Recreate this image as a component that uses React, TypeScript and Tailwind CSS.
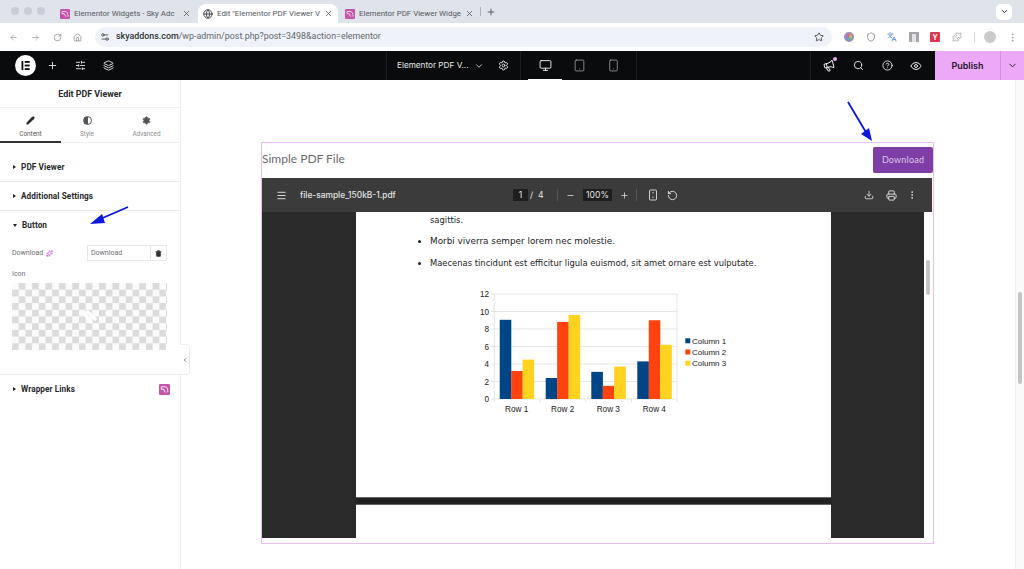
import React from "react";
import {
  ArrowLeft, ArrowRight, RotateCw, Home, Star, Plus, SlidersHorizontal, Layers, ChevronDown, Settings, Monitor, Tablet,
  Smartphone, Search, CircleHelp, Eye, Megaphone, Menu, Minus, Download, Printer, EllipsisVertical, Pencil, Trash2, Globe,
  X, Sparkles, ChevronLeft, RotateCcw, Puzzle, Shield, Languages, Settings2,
} from "lucide-react";

function SkyLogo({ size = 11 }: { size?: number }) {
  return (
    <svg width={size} height={size} viewBox="0 0 12 12" className="shrink-0">
      <rect width="12" height="12" rx="1.5" fill="#c255a8" />
      <path d="M2.5 3h4M2.5 3v2.6h2.5l2 3.6M6.5 3c2.2 0 3.2 2.6 3.2 6.2" stroke="#f8dcf0" strokeWidth="1.1" fill="none" />
    </svg>
  );
}

function Tab({ w, active, text, icon }: { w: string; active?: boolean; text: string; icon: React.ReactNode }) {
  return (
    <div className={`${w} ${active ? "bg-white rounded-t-lg" : ""} h-[19px] flex items-center pl-[6px] pr-[7px] gap-[4px] shrink-0`}>
      {icon}
      <span className="flex-1 whitespace-nowrap font-['Roboto',sans-serif] text-[7.9px] text-[#55585d]">{text}</span>
      <X size={9} strokeWidth={2} className="text-[#4a4d52] shrink-0" />
    </div>
  );
}

function SectionRow({ label, open, h, end }: { label: string; open?: boolean; h: string; end?: React.ReactNode }) {
  return (
    <div className={`${h} flex items-center pl-[13px] pr-[10px] gap-[5px]`}>
      <span className={`w-0 h-0 border-transparent ${open ? "border-t-[#222] border-t-[3px] border-x-[2.5px] border-b-0" : "border-l-[#222] border-l-[3px] border-y-[2.5px] border-r-0"}`} />
      <span className="flex-1 text-[8.2px] font-bold text-[#26282b] tracking-[0.1px]">{label}</span>
      {end}
    </div>
  );
}

function Chart() {
  const y = (v: number) => 399 - v * 8.75;
  const colors = ["#004586", "#ff420e", "#ffd320"];
  const groups = [
    [499.7, [9.05, 3.2, 4.5]],
    [545.7, [2.4, 8.8, 9.6]],
    [591.3, [3.1, 1.5, 3.7]],
    [637.3, [4.3, 9, 6.2]],
  ] as [number, number[]][];
  const names = ["Row 1", "Row 2", "Row 3", "Row 4"];
  return (
    <svg width="280" height="140" viewBox="460 280 280 140" className="block" style={{ fontFamily: '"Liberation Sans", sans-serif' }}>
      {[0, 2, 4, 6, 8, 10, 12].map((v) => (
        <g key={v}>
          <line x1="491" x2="677" y1={y(v)} y2={y(v)} stroke="#dedede" strokeWidth="0.8" />
          <text x="489" y={y(v) + 3} fontSize="8.2" textAnchor="end" fill="#222">{v}</text>
        </g>
      ))}
      <line x1="494.3" x2="494.3" y1="294" y2="402" stroke="#dedede" strokeWidth="0.8" />
      <line x1="677" x2="677" y1="294" y2="402" stroke="#dedede" strokeWidth="0.8" />
      {[540, 585.7, 631.5].map((x) => (
        <line key={x} x1={x} x2={x} y1="399" y2="402" stroke="#dedede" strokeWidth="0.8" />
      ))}
      {groups.map(([x, vals], i) => (
        <g key={i}>
          {vals.map((v, j) => (
            <rect key={j} x={x + j * 11.45} width="11.6" y={y(v)} height={v * 8.75} fill={colors[j]} />
          ))}
          <text x={x + 17} y="412" fontSize="8.2" textAnchor="middle" fill="#222">{names[i]}</text>
        </g>
      ))}
      {["Column 1", "Column 2", "Column 3"].map((t, i) => (
        <g key={t}>
          <rect x="685.3" y={338.3 + i * 11.2} width="5" height="5" fill={colors[i]} />
          <text x="692" y={343.9 + i * 11.2} fontSize="8" fill="#222">{t}</text>
        </g>
      ))}
    </svg>
  );
}

export default function App() {
  return (
    <div className="relative w-[1024px] h-[569px] overflow-hidden bg-white flex flex-col font-['Inter',sans-serif]">
      {/* tab strip */}
      <div className="h-[23px] bg-[#dfe3ea] flex items-end pl-[11px] shrink-0">
        <div className="flex gap-[5px] self-center w-[41px] shrink-0 pb-[1px]">
          <span className="w-[8px] h-[8px] rounded-full bg-[#c9cdd3]" />
          <span className="w-[8px] h-[8px] rounded-full bg-[#c9cdd3]" />
          <span className="w-[8px] h-[8px] rounded-full bg-[#c9cdd3]" />
        </div>
        <Tab w="w-[146px]" text="Elementor Widgets - Sky Adc" icon={<span className="ml-[2px]"><SkyLogo size={10} /></span>} />
        <Tab w="w-[140px]" active text={'Edit "Elementor PDF Viewer V'} icon={<Globe size={10} strokeWidth={2.4} className="text-[#45484d] shrink-0 ml-[-1px]" />} />
        <Tab w="w-[142px]" text="Elementor PDF Viewer Widge" icon={<span className="ml-[1px]"><SkyLogo size={10} /></span>} />
        <span className="w-px h-[9px] bg-[#aeb2b8] self-center shrink-0" />
        <Plus size={10} strokeWidth={2} className="ml-[5px] self-center text-[#45484d]" />
        <div className="ml-auto mr-[12px] self-center w-[16px] h-[16px] rounded-[5px] bg-white flex items-center justify-center">
          <ChevronDown size={9} strokeWidth={2.6} className="text-[#333]" />
        </div>
      </div>
      {/* browser toolbar */}
      <div className="h-[28px] bg-white flex items-center shrink-0 pl-[9px] pr-[6px]">
        <ArrowLeft size={9} className="text-[#9b9ea3]" />
        <ArrowRight size={9} className="ml-[13px] text-[#9b9ea3]" />
        <RotateCw size={9} className="ml-[13px] text-[#8a8d92]" />
        <Home size={9} className="ml-[11px] text-[#8a8d92]" />
        <div className="ml-[13px] w-[737px] h-[20px] rounded-full bg-[#eff3f9] flex items-center pl-[4px] pr-[8px]">
          <span className="w-[10px] h-[10px] rounded-full ml-[1px] flex items-center justify-center"><Settings2 size={10} className="text-[#45484d]" /></span>
          <span className="ml-[6px] text-[8.9px] font-['Roboto',sans-serif] font-medium text-[#2f3237] whitespace-nowrap">
            skyaddons.com<span className="text-[#63676c] font-normal">/wp-admin/post.php?post=3498&amp;action=elementor</span>
          </span>
          <Star size={10} strokeWidth={2} className="ml-auto text-[#3a3d42]" />
        </div>
        <div className="ml-[12px] flex items-center gap-[11.5px]">
          <span className="w-[10px] h-[10px] rounded-full bg-[conic-gradient(#e8706a,#e8b85a,#6fbf73,#6a9ae8,#b06ae8,#e8706a)] border-2 border-[#9c8fb0]" />
          <Shield size={10} strokeWidth={2.4} className="text-[#8f9296]" />
          <Languages size={10} strokeWidth={2.4} className="text-[#6f9be0]" />
          <span className="w-[10px] h-[10px] bg-[#e4e5e6] border-x-[3px] border-t-[2px] border-[#a3a5a8]" />
          <span className="w-[10px] h-[10px] rounded-[1px] bg-[#d9364f] flex items-center justify-center text-[7px] font-bold text-white leading-none">Y</span>
          <Puzzle size={10} strokeWidth={1.6} className="text-[#8a8d92]" />
        </div>
        <span className="ml-[12px] w-px h-[10px] bg-[#d5d7da]" />
        <span className="ml-[9px] w-[12px] h-[12px] rounded-full bg-[#c9cbcd]" />
        <EllipsisVertical size={11} className="ml-[11px] text-[#9a9da1]" />
      </div>
      {/* elementor top bar */}
      <div className="h-[29px] bg-[#0a0b0d] flex items-stretch text-[#e6e8ea] shrink-0">
        <div className="w-[387px] flex items-center pl-[15px] border-r border-[#1d1e21]">
          <svg width="21" height="21" viewBox="0 0 21 21">
            <circle cx="10.5" cy="10.5" r="10.5" fill="#fff" />
            <rect x="6.5" y="6" width="1.8" height="9" fill="#0a0b0d" />
            <rect x="9.7" y="6" width="5" height="1.8" fill="#0a0b0d" />
            <rect x="9.7" y="9.6" width="5" height="1.8" fill="#0a0b0d" />
            <rect x="9.7" y="13.2" width="5" height="1.8" fill="#0a0b0d" />
          </svg>
          <Plus size={11} className="ml-[11px]" />
          <SlidersHorizontal size={11} className="ml-[17px]" />
          <Layers size={11} className="ml-[17px]" />
        </div>
        <div className="w-[134px] flex items-center pl-[10px] border-r border-[#1d1e21]">
          <span className="text-[8.2px] whitespace-nowrap w-[77px]">Elementor PDF V...</span>
          <ChevronDown size={10} />
          <Settings size={11} className="ml-[14px]" />
        </div>
        <div className="w-[116px] flex items-center pl-[18px] gap-[21px] border-r border-[#1d1e21] relative">
          <Monitor size={13} strokeWidth={1.6} className="text-white" />
          <Tablet size={13} strokeWidth={1.3} className="text-[#b5b7ba]" />
          <Smartphone size={13} strokeWidth={1.3} className="text-[#b5b7ba]" />
          <span className="absolute left-[7px] bottom-0 w-[34px] h-[1px] bg-white" />
        </div>
        <div className="flex-1 flex items-center pl-[173px]">
          <span className="w-px h-full bg-[#1d1e21]" />
          <span className="relative ml-[12px]">
            <Megaphone size={12} className="-rotate-[15deg]" />
            <span className="absolute right-[-2px] top-[-3px] w-[4px] h-[4px] rounded-full bg-[#eaa6f5]" />
          </span>
          <Search size={11} className="ml-[18px]" />
          <CircleHelp size={11} className="ml-[18px]" />
          <Eye size={12} className="ml-[17px]" />
        </div>
        <div className="w-[89px] bg-[#eba9f7] flex items-center text-[#26122b] shrink-0">
          <span className="w-[65px] text-center text-[9px] font-semibold">Publish</span>
          <span className="w-px h-full bg-[#d98ee6]" />
          <ChevronDown size={11} className="ml-[6px]" />
        </div>
      </div>
      {/* workspace */}
      <div className="flex-1 flex min-h-0">
        {/* sidebar */}
        <div className="relative w-[181px] shrink-0 border-r border-[#eeeff0] bg-white flex flex-col font-['Roboto',sans-serif]">
          <div className="h-[28px] pt-[2px] flex items-center justify-center text-[8.9px] font-bold text-[#26282b] border-b border-[#f0f0f1]">Edit PDF Viewer</div>
          <div className="h-[35px] flex border-b border-[#eeeff0] text-[6.4px]">
            <div className="w-[61px] flex flex-col items-center pt-[8px] border-b-2 border-[#333] text-[#555] h-[35px]">
              <Pencil size={9} fill="#26282b" className="text-[#26282b]" />
              <span className="mt-[5px]">Content</span>
            </div>
            <div className="w-[52px] flex flex-col items-center pt-[8px] text-[#8b8d90]">
              <span className="w-[9px] h-[9px] rounded-full border border-[#555] bg-[linear-gradient(90deg,#555_50%,#fff_50%)]" />
              <span className="mt-[5px]">Style</span>
            </div>
            <div className="flex-1 flex flex-col items-center pt-[8px] text-[#8b8d90]">
              <Settings size={9} fill="#555" className="text-[#555]" />
              <span className="mt-[5px]">Advanced</span>
            </div>
          </div>
          <div className="h-[1px]" />
          <SectionRow label="PDF Viewer" h="h-[37px] pt-[9px]" />
          <div className="h-[1px] bg-[#e9eaeb]" />
          <SectionRow label="Additional Settings" h="h-[28px]" />
          <div className="h-[1px] bg-[#e9eaeb]" />
          <SectionRow label="Button" open h="h-[28px]" />
          <div className="pl-[12px] pr-[13px]">
            <div className="flex items-center h-[16px] mt-[6px]">
              <span className="text-[7px] text-[#6d7073]">Download</span>
              <Sparkles size={7} className="ml-[3px] text-[#c33fd0]" />
              <div className="ml-auto w-[80px] h-[16px] flex border border-[#e6e7e8] bg-white">
                <span className="flex-1 text-[7px] leading-[14px] pl-[3px] text-[#6d7073]">Download</span>
                <span className="w-[16px] border-l border-[#e6e7e8] flex items-center justify-center">
                  <Trash2 size={7} fill="#333" className="text-[#333]" />
                </span>
              </div>
            </div>
            <div className="text-[7px] text-[#6d7073] mt-[8px] leading-[10px]">Icon</div>
            <div className="relative mt-[4px] h-[67px] bg-[conic-gradient(#dcdcdc_25%,#fbfbfb_0_50%,#dcdcdc_0_75%,#fbfbfb_0)] bg-[length:13.4px_13.4px] flex items-center justify-center">
              <svg width="14" height="14" viewBox="0 0 14 14">
                <path d="M2 4l6 8M5 2l7 7" stroke="#fff" strokeWidth="3.4" strokeLinecap="round" fill="none" />
              </svg>
            </div>
          </div>
          <div className="h-[24px]" />
          <div className="h-[1px] bg-[#e9eaeb]" />
          <SectionRow label="Wrapper Links" h="h-[28px]" end={<SkyLogo size={11} />} />
          <div className="absolute left-[180px] top-[264px] w-[10px] h-[31px] bg-white border border-l-0 border-[#eeeff0] rounded-r-[3px] flex items-center justify-center">
            <ChevronLeft size={6} strokeWidth={3} className="text-[#555]" />
          </div>
        </div>
        {/* canvas */}
        <div className="flex-1 min-w-0 flex">
          <div className="flex-1 min-w-0 pl-[80px] pt-[62px]">
            <div className="w-[673px] h-[402px] border border-[#ebbdf5] flex flex-col">
              <div className="h-[35px] flex items-center justify-between shrink-0">
                <span className="text-[12px] text-[#6b6b6b] font-['Lato',sans-serif] pb-[4px]">Simple PDF File</span>
                <div className="w-[60px] h-[26px] mb-[1px] rounded-[2px] bg-[#7e3ea6] flex items-center justify-center text-[9px] text-[#dcc7ea] font-['Lato',sans-serif] tracking-[0.2px]">Download</div>
              </div>
              <div className="h-[34px] bg-[#3b3b3b] flex items-center text-[#e4e4e4] shrink-0 mr-[1px] text-[8.6px]">
                <Menu size={11} className="ml-[14px]" />
                <span className="ml-[13px] text-[8.4px] font-medium w-[213px]">file-sample_150kB-1.pdf</span>
                <span className="w-[15px] h-[12px] bg-[#1e1e1e] text-center leading-[12px]">1</span>
                <span className="ml-[2px] w-[27px]">/&nbsp;&nbsp;4</span>
                <span className="w-px h-[12px] bg-[#555]" />
                <Minus size={9} className="ml-[8px]" />
                <span className="ml-[8px] w-[29px] h-[12px] bg-[#1e1e1e] text-center leading-[12px]">100%</span>
                <Plus size={9} className="ml-[8px]" />
                <span className="ml-[7px] w-px h-[12px] bg-[#555]" />
                <svg width="10" height="12" viewBox="0 0 10 12" className="ml-[11px]" fill="none" stroke="#cfcfcf" strokeWidth="1">
                  <rect x="1.5" y="1" width="7" height="10" rx="1" />
                  <path d="M5 3v1.5M5 7.5V9" />
                </svg>
                <RotateCcw size={11} className="ml-[9px]" />
                <Download size={10} className="ml-[186px]" />
                <Printer size={11} className="ml-[12px]" />
                <EllipsisVertical size={10} className="ml-[10px]" />
              </div>
              <div className="relative h-[326px] flex overflow-hidden shrink-0">
                <div className="w-[94px] bg-[#2a2a2a] shrink-0" />
                <div className="w-[475px] shrink-0 bg-[#2a2a2a] flex flex-col">
                  <div className="h-[285px] bg-white shrink-0 font-['DejaVu_Sans',sans-serif] text-[#222] text-[8.4px]">
                    <p className="pl-[74px] pt-[3px] leading-[11px]">sagittis.</p>
                    <ul className="list-disc pl-[74px] mt-[10px]">
                      <li className="leading-[11px] text-[8.85px]">Morbi viverra semper lorem nec molestie.</li>
                      <li className="leading-[11px] mt-[11px] whitespace-nowrap">Maecenas tincidunt est efficitur ligula euismod, sit amet ornare est vulputate.</li>
                    </ul>
                    <div className="ml-[104px] mt-[11px]"><Chart /></div>
                  </div>
                  <div className="h-[8px] border-y border-[#666] bg-[#222] shrink-0" />
                  <div className="flex-1 bg-white" />
                </div>
                <div className="w-[93px] bg-[#2a2a2a] shrink-0" />
                <div className="flex-1 bg-white relative">
                  <span className="absolute left-[2px] top-[48px] w-[4px] h-[35px] rounded-full bg-[#c6c6c6]" />
                </div>
              </div>
            </div>
          </div>
          {/* page scrollbar */}
          <div className="w-[9px] bg-[#fafafa] border-l border-[#efefef] shrink-0 relative">
            <span className="absolute left-[2px] top-[212px] w-[4px] h-[92px] rounded-full bg-[#c4c4c4]" />
          </div>
        </div>
      </div>
      {/* annotation arrows */}
      <svg className="absolute left-0 top-0 pointer-events-none" width="1024" height="569">
        <path d="M128 207L98 220" stroke="#0d17dc" strokeWidth="1.8" />
        <path d="M90 224l12-10 3 9z" fill="#0d17dc" />
        <path d="M848 102L867 134" stroke="#0d17dc" strokeWidth="1.8" />
        <path d="M872 141l-11-7 8-6z" fill="#0d17dc" />
      </svg>
    </div>
  );
}
